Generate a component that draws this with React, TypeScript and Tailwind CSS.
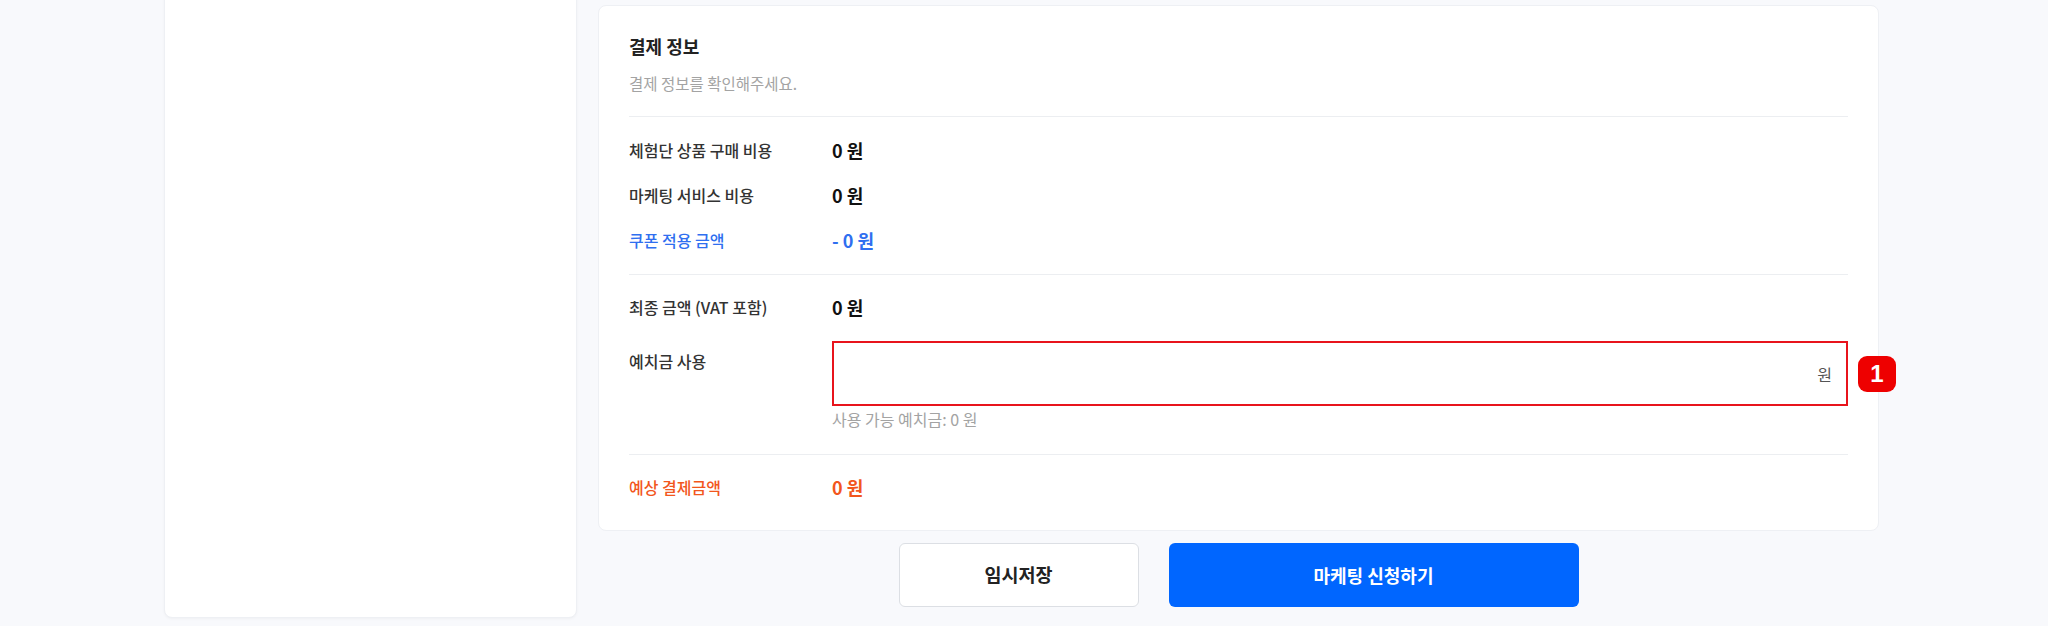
import React from "react";

const FONT = { fontFamily: '"Noto Sans CJK KR", "Noto Sans", sans-serif' };

function Row({
  label,
  value,
  tone = "default",
}: {
  label: string;
  value: string;
  tone?: "default" | "blue" | "orange";
}) {
  const labelColor =
    tone === "blue" ? "text-[#2f6ff0]" : tone === "orange" ? "text-[#f2561d]" : "text-[#333333]";
  const valueColor =
    tone === "blue" ? "text-[#2f6ff0]" : tone === "orange" ? "text-[#f2561d]" : "text-[#111111]";
  return (
    <div className="flex items-center h-[24px]">
      <div className={`w-[203px] shrink-0 text-[16px] font-medium leading-[24px] ${labelColor}`}>{label}</div>
      <div className={`text-[18px] font-bold leading-[24px] ${valueColor}`}>{value}</div>
    </div>
  );
}

export default function App() {
  return (
    <div className="w-[2048px] h-[626px] overflow-hidden bg-[#f8f9fc]" style={FONT}>
      <div className="flex items-start gap-[21px] pl-[164px]">
        <aside className="w-[413px] h-[634px] -mt-[16px] shrink-0 rounded-lg bg-white border border-[#eef0f4] shadow-[0_1px_3px_rgba(0,0,0,0.04)]" />
        <div className="w-[1281px] shrink-0 pt-[5px]">
          <section className="rounded-lg bg-white border border-[#eef0f4] px-[30px] pt-[26px] pb-[31px]">
            <h2 className="text-[18px] font-bold leading-[28px] text-[#222222]">결제 정보</h2>
            <p className="mt-[13px] text-[15.5px] leading-[20px] text-[#a3a3a3]">결제 정보를 확인해주세요.</p>
            <div className="mt-[23px] h-px bg-[#eceef1]" />
            <div className="pt-[21px] flex flex-col gap-[21px]">
              <Row label="체험단 상품 구매 비용" value="0 원" />
              <Row label="마케팅 서비스 비용" value="0 원" />
              <Row label="쿠폰 적용 금액" value="- 0 원" tone="blue" />
            </div>
            <div className="mt-[22px] h-px bg-[#eceef1]" />
            <div className="pt-[20px]">
              <Row label="최종 금액 (VAT 포함)" value="0 원" />
            </div>
            <div className="mt-[22px] flex items-start">
              <div className="w-[203px] shrink-0 pt-[8px] text-[16px] font-medium leading-[24px] text-[#333333]">
                예치금 사용
              </div>
              <div className="flex-1">
                <div className="relative">
                  <div className="h-[65px] flex items-center justify-end border-2 border-[#e8141c] bg-white pr-[14px]">
                    <span className="text-[16px] text-[#555555]">원</span>
                  </div>
                  <div className="absolute left-[calc(100%+10px)] top-1/2 -translate-y-1/2 w-[38px] h-[36px] rounded-[9px] bg-[#ee0000] flex items-center justify-center">
                    <span className="text-white text-[24px] font-bold leading-none" style={{ fontFamily: '"Liberation Sans", Arial, sans-serif' }}>
                      1
                    </span>
                  </div>
                </div>
                <p className="mt-[4px] text-[16px] leading-[18px] text-[#a3a3a3]">사용 가능 예치금: 0 원</p>
              </div>
            </div>
            <div className="mt-[26px] h-px bg-[#eceef1]" />
            <div className="pt-[20px]">
              <Row label="예상 결제금액" value="0 원" tone="orange" />
            </div>
          </section>
          <div className="mt-[12px] flex justify-center gap-[30px]">
            <button className="w-[240px] h-[64px] rounded-md border border-[#dcdfe4] bg-white text-[18.5px] font-semibold text-[#222222]">
              임시저장
            </button>
            <button className="w-[410px] h-[64px] rounded-md bg-[#0066ff] text-[18px] font-semibold text-white">
              마케팅 신청하기
            </button>
          </div>
        </div>
      </div>
    </div>
  );
}
